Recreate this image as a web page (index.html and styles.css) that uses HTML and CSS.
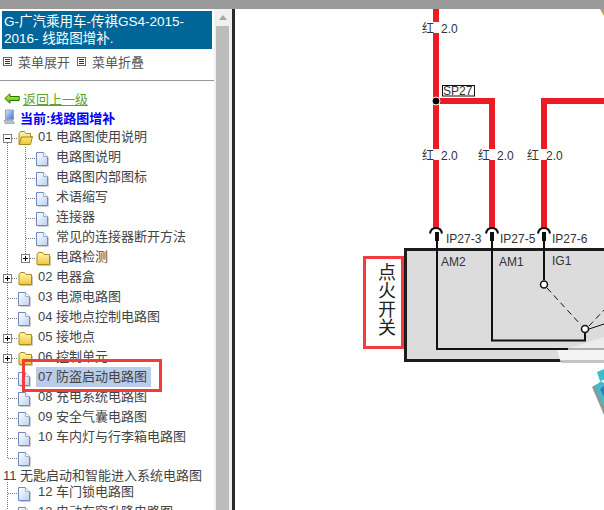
FILE: index.html
```html
<!DOCTYPE html>
<html lang="zh">
<head>
<meta charset="utf-8">
<title>线路图增补</title>
<link rel="stylesheet" href="styles.css">
</head>
<body>
<svg class="defs" aria-hidden="true">
  <defs>
    <linearGradient id="fold" x1="0" y1="0" x2="0" y2="1"><stop offset="0" stop-color="#fff6b0"/><stop offset="1" stop-color="#f0c838"/></linearGradient>
    <linearGradient id="paper" x1="0" y1="0" x2="1" y2="1"><stop offset="0" stop-color="#ffffff"/><stop offset="1" stop-color="#bcd0f0"/></linearGradient>
    <linearGradient id="arrowfill" x1="0" y1="0" x2="0" y2="1"><stop offset="0" stop-color="#d8f040"/><stop offset="1" stop-color="#60b010"/></linearGradient>
    <linearGradient id="screen" x1="0" y1="0" x2="1" y2="1"><stop offset="0" stop-color="#dce8fa"/><stop offset="1" stop-color="#3a70d0"/></linearGradient>
    <symbol id="line" viewBox="0 0 18 20"><path d="M7.500 0V20" class="dot"/></symbol>
    <symbol id="branch" viewBox="0 0 18 20"><path d="M7.500 0V20M8 11.500H18" class="dot"/></symbol>
    <symbol id="last" viewBox="0 0 18 20"><path d="M7.500 0V11.500M8 11.500H18" class="dot"/></symbol>
    <symbol id="plus" viewBox="0 0 18 20"><path d="M7.500 0V20M12 11.500H18" class="dot"/><rect x="3.500" y="7.500" width="8" height="8" fill="#fff" stroke="#808080"/><path d="M5 11.500H10M7.500 9V14" stroke="#000"/></symbol>
    <symbol id="plus-end" viewBox="0 0 18 20"><path d="M7.500 0V7M12 11.500H18" class="dot"/><rect x="3.500" y="7.500" width="8" height="8" fill="#fff" stroke="#808080"/><path d="M5 11.500H10M7.500 9V14" stroke="#000"/></symbol>
    <symbol id="minus" viewBox="0 0 18 20"><path d="M7.500 16V20M12 11.500H18" class="dot"/><rect x="3.500" y="7.500" width="8" height="8" fill="#fff" stroke="#808080"/><path d="M5 11.500H10" stroke="#000"/></symbol>
    <symbol id="folder" viewBox="0 0 15 20"><path d="M1 7.500L2.500 5.500H6.500L8 7.500H13.500V17.500H1Z" fill="url(#fold)" stroke="#a88a20"/><path d="M14.500 9V18.500H2" fill="none" stroke="#c8c8c0"/></symbol>
    <symbol id="folder-open" viewBox="0 0 15 20"><path d="M1 6.500L2.500 4.500H6.500L8 6.500H12.500V9.500H14.500L12.500 17.500H1Z" fill="url(#fold)" stroke="#a88a20"/><path d="M1.500 17L3.500 10H14" fill="none" stroke="#a88a20"/></symbol>
    <symbol id="page" viewBox="0 0 15 20"><path d="M0.500 5.500H7.500L11.500 9.500V18.500H0.500Z" fill="url(#paper)" stroke="#6d88c4"/><path d="M7.500 5.500V9.500H11.500" fill="#fff" stroke="#9ab0dc"/><path d="M12.500 10V19.500H2" fill="none" stroke="#cfcfcf"/></symbol>
    <symbol id="menu" viewBox="0 0 9 9"><rect x="0.500" y="0.500" width="8" height="8" fill="#fff" stroke="#666"/><path d="M2 2.500H7M2 4.500H7M2 6.500H7" stroke="#333"/></symbol>
  </defs>
</svg>
<div class="topbar"></div>
<div class="frame">
  <aside class="sidebar">
    <h1 class="title">G-广汽乘用车-传祺GS4-2015-<br>2016- 线路图增补.</h1>
    <div class="menu">
      <svg class="menu-icon"><use href="#menu"/></svg><span class="menu-label">菜单展开</span>
      <svg class="menu-icon"><use href="#menu"/></svg><span class="menu-label">菜单折叠</span>
    </div>
    <hr class="rule">
    <a class="back" href="#">
      <svg class="back-icon" viewBox="0 0 16 11"><path d="M0.800 5.500L6 0.800V3.500H15.200V7.500H6V10.200Z" fill="url(#arrowfill)" stroke="#1c7a00"/></svg>
      <span class="back-text">返回上一级</span>
    </a>
    <div class="current">
      <svg class="current-icon" viewBox="0 0 12 16"><path d="M2.500 1H10.500V10.500H2.500Z" fill="url(#screen)" stroke="#8fa4c8"/><path d="M1 11.500H10L11.500 14.500H2Z" fill="#b8c0cc" stroke="#8a93a3" stroke-width=".6"/></svg>
      <span>当前:线路图增补</span>
    </div>
    <ul class="tree">
      <li class="row"><svg class="cell"><use href="#minus"/></svg><svg class="icon"><use href="#folder-open"/></svg><span class="label">01 电路图使用说明</span></li>
      <li class="row"><svg class="cell"><use href="#line"/></svg><svg class="cell"><use href="#branch"/></svg><svg class="icon"><use href="#page"/></svg><span class="label">电路图说明</span></li>
      <li class="row"><svg class="cell"><use href="#line"/></svg><svg class="cell"><use href="#branch"/></svg><svg class="icon"><use href="#page"/></svg><span class="label">电路图内部图标</span></li>
      <li class="row"><svg class="cell"><use href="#line"/></svg><svg class="cell"><use href="#branch"/></svg><svg class="icon"><use href="#page"/></svg><span class="label">术语缩写</span></li>
      <li class="row"><svg class="cell"><use href="#line"/></svg><svg class="cell"><use href="#branch"/></svg><svg class="icon"><use href="#page"/></svg><span class="label">连接器</span></li>
      <li class="row"><svg class="cell"><use href="#line"/></svg><svg class="cell"><use href="#branch"/></svg><svg class="icon"><use href="#page"/></svg><span class="label">常见的连接器断开方法</span></li>
      <li class="row"><svg class="cell"><use href="#line"/></svg><svg class="cell"><use href="#plus-end"/></svg><svg class="icon"><use href="#folder"/></svg><span class="label">电路检测</span></li>
      <li class="row"><svg class="cell"><use href="#plus"/></svg><svg class="icon"><use href="#folder"/></svg><span class="label">02 电器盒</span></li>
      <li class="row"><svg class="cell"><use href="#branch"/></svg><svg class="icon"><use href="#page"/></svg><span class="label">03 电源电路图</span></li>
      <li class="row"><svg class="cell"><use href="#branch"/></svg><svg class="icon"><use href="#page"/></svg><span class="label">04 接地点控制电路图</span></li>
      <li class="row"><svg class="cell"><use href="#plus"/></svg><svg class="icon"><use href="#folder"/></svg><span class="label">05 接地点</span></li>
      <li class="row"><svg class="cell"><use href="#plus"/></svg><svg class="icon"><use href="#folder"/></svg><span class="label">06 控制单元</span></li>
      <li class="row"><svg class="cell"><use href="#branch"/></svg><svg class="icon"><use href="#page"/></svg><span class="label selected">07 防盗启动电路图</span></li>
      <li class="row"><svg class="cell"><use href="#branch"/></svg><svg class="icon"><use href="#page"/></svg><span class="label">08 充电系统电路图</span></li>
      <li class="row"><svg class="cell"><use href="#branch"/></svg><svg class="icon"><use href="#page"/></svg><span class="label">09 安全气囊电路图</span></li>
      <li class="row"><svg class="cell"><use href="#branch"/></svg><svg class="icon"><use href="#page"/></svg><span class="label">10 车内灯与行李箱电路图</span></li>
      <li class="row"><svg class="cell"><use href="#last"/></svg><svg class="icon"><use href="#page"/></svg></li>
      <li class="row plain">11 无匙启动和智能进入系统电路图</li>
      <li class="row"><svg class="cell"><use href="#branch"/></svg><svg class="icon"><use href="#page"/></svg><span class="label">12 车门锁电路图</span></li>
      <li class="row"><svg class="cell"><use href="#branch"/></svg><svg class="icon"><use href="#page"/></svg><span class="label">13 电动车窗升降电路图</span></li>
    </ul>
    <div class="callout"></div>
  </aside>
  <div class="scrollbar"><div class="scroll-up"></div><div class="scroll-thumb"></div></div>
  <div class="splitter"></div>
  <main class="canvas">
    <svg class="diagram" viewBox="235 9 369 501">
      <path d="M600 9L604 9V16Z" fill="#b9a15f"/>
      <!-- component body -->
      <rect x="405.500" y="249.500" width="210" height="111" fill="#dcdcdc" stroke="#1c1c1c" stroke-width="3"/>
      <!-- wires -->
      <g fill="none" stroke="#ed1c24" stroke-width="6">
        <path d="M436 9V228"/>
        <path d="M436 101H492V228"/>
        <path d="M604 101H544V228"/>
      </g>
      <g fill="#fff">
        <rect x="420" y="22" width="40" height="11"/>
        <rect x="420" y="149" width="40" height="11"/>
        <rect x="476" y="149" width="40" height="11"/>
        <rect x="526" y="149" width="36" height="11"/>
      </g>
      <circle cx="436" cy="101" r="4" fill="#000" stroke="#fff" stroke-width="1"/>
      <rect class="tag" x="442.500" y="85.500" width="32" height="10.500"/>
      <text class="small" x="443" y="95">SP27</text>
      <g class="small">
        <text x="422" y="32.500">红</text><text x="441" y="32.500">2.0</text>
        <text x="422" y="159.500">红</text><text x="441" y="159.500">2.0</text>
        <text x="478" y="159.500">红</text><text x="497" y="159.500">2.0</text>
        <text x="527" y="159.500">红</text><text x="546" y="159.500">2.0</text>
        <text x="446" y="243">IP27-3</text>
        <text x="500" y="243">IP27-5</text>
        <text x="552" y="243">IP27-6</text>
        <text x="441" y="266">AM2</text>
        <text x="499" y="266">AM1</text>
        <text x="552" y="265">IG1</text>
      </g>
      <!-- connectors -->
      <g fill="none" stroke="#111" stroke-width="2">
        <path d="M430 233.500C431 226 441 226 442 233.500"/>
        <path d="M486 233.500C487 226 497 226 498 233.500"/>
        <path d="M538 233.500C539 226 549 226 550 233.500"/>
      </g>
      <g stroke="#111" stroke-width="4">
        <path d="M437 232V241"/><path d="M492 232V241"/><path d="M544 232V241"/>
      </g>
      <g fill="none" stroke="#111" stroke-width="2">
        <path d="M437 241V349H568"/>
        <path d="M492 241V340.500H585V333"/>
        <path d="M544 241V280"/>
      </g>
      <g fill="none" stroke="#111" stroke-width="1">
        <path d="M547 288L581 325" stroke-dasharray="6 4"/>
        <path d="M589 326L604 310" stroke-dasharray="6 4"/>
        <path d="M589 329L604 324"/>
      </g>
      <circle cx="544" cy="284.500" r="3.500" fill="#fff" stroke="#111" stroke-width="1.500"/>
      <circle cx="585" cy="329" r="3.500" fill="#fff" stroke="#111" stroke-width="1.500"/>
      <!-- watermark over the picture -->
      <path d="M570 348L604 337V349H570Z" fill="#ececec"/>
      <path d="M557 350H604V363H561Z" fill="#f4f4f4"/>
      <path d="M568 349H604" stroke="#b0b0b0" stroke-width="2"/>
      <path d="M561 361.500H604" stroke="#c4c4c4" stroke-width="3"/>
      <path d="M597 372L604 369V380L600 381Z" fill="#35c0cc"/>
      <path d="M592 387L597 384L604 400V415Z" fill="#8c9a9a"/>
      <path d="M595 386L601 381L604 383V406Z" fill="#3fbccb"/>
      <path d="M600 389L604 386V397Z" fill="#3a7ab8"/>
      <!-- label -->
      <rect x="364.500" y="257.500" width="38" height="90" fill="#fff" stroke="#f43a3a" stroke-width="3"/>
      <text class="big" x="387" y="263">点火开关</text>
    </svg>
  </main>
</div>
</body>
</html>
```

FILE: styles.css
```css
* { box-sizing: border-box; }

html, body {
  margin: 0;
  height: 510px;
  overflow: hidden;
  background: #fff;
}

body {
  font-family: "Liberation Sans", "Noto Sans CJK SC", sans-serif;
  font-size: 13px;
  color: #444;
  display: flex;
  flex-direction: column;
}

.defs {
  position: absolute;
  width: 0;
  height: 0;
}

.dot {
  fill: none;
  stroke: #777;
  stroke-dasharray: 1 1;
}

.topbar {
  height: 9px;
  flex: none;
  background: #999;
}

.frame {
  flex: 1;
  display: flex;
  min-height: 0;
}

.sidebar {
  position: relative;
  width: 214px;
  flex: none;
  padding-top: 2px;
  overflow: hidden;
}

.title {
  margin: 0 2px;
  padding: 2px;
  height: 38px;
  background: #006699;
  color: #fff;
  font-size: 13.5px;
  font-weight: normal;
  line-height: 17px;
  white-space: nowrap;
}

.menu {
  display: flex;
  align-items: center;
  height: 24px;
  padding-left: 3px;
}

.menu-icon {
  width: 9px;
  height: 9px;
  flex: none;
}

.menu-label {
  margin: 0 7px 0 6px;
  color: #555;
}

.rule {
  margin: 7px 0 0;
  border: 0;
  border-top: 1px solid #999;
}

.back {
  display: flex;
  align-items: center;
  height: 18px;
  margin-top: 8px;
  padding-left: 4px;
  color: #5fa332;
}

.back-icon {
  width: 16px;
  height: 11px;
  flex: none;
  margin-right: 3px;
}

.back-text {
  text-decoration: underline;
}

.current {
  display: flex;
  align-items: center;
  height: 20px;
  padding-left: 3px;
  color: #0000ff;
  font-weight: bold;
}

.current-icon {
  width: 12px;
  height: 16px;
  flex: none;
  margin-right: 5px;
}

.tree {
  list-style: none;
  margin: 0;
  padding: 0;
}

.row {
  display: flex;
  align-items: center;
  height: 20px;
  white-space: nowrap;
}

.row.plain {
  height: 15px;
  padding-left: 3px;
}

.cell {
  width: 18px;
  height: 20px;
  flex: none;
}

.icon {
  width: 15px;
  height: 20px;
  flex: none;
  margin-right: 5px;
}

.label {
  line-height: 20px;
}

.label.selected {
  margin-left: -2px;
  padding: 0 4px 0 2px;
  background: #b9cce8;
}

.callout {
  position: absolute;
  left: 22px;
  top: 350px;
  width: 140px;
  height: 33px;
  border: 3px solid #f43a3a;
  pointer-events: none;
}

.scrollbar {
  width: 18px;
  flex: none;
  display: flex;
  flex-direction: column;
  background: #f0f0f0;
  padding: 0 2px;
}

.scroll-up {
  width: 0;
  height: 0;
  margin: 6px auto 6px;
  border: 4px solid transparent;
  border-top: 0;
  border-bottom: 5px solid #a6a6a6;
}

.scroll-thumb {
  flex: 1;
  width: 13px;
  background: #bcbcbc;
}

.splitter {
  width: 3px;
  flex: none;
  background: #2a2a2a;
}

.canvas {
  flex: 1;
  min-width: 0;
  background: #fff;
}

.diagram {
  display: block;
  width: 369px;
  height: 501px;
}

.small text, .small {
  font-family: "Liberation Sans", "Noto Sans CJK SC", sans-serif;
  font-size: 12px;
  fill: #333;
}

.tag {
  fill: #fff;
  stroke: #111;
  stroke-width: 1;
}

.big {
  font-family: "Noto Sans CJK SC", sans-serif;
  font-size: 18px;
  letter-spacing: 0.5px;
  fill: #222;
  writing-mode: vertical-rl;
}
```
